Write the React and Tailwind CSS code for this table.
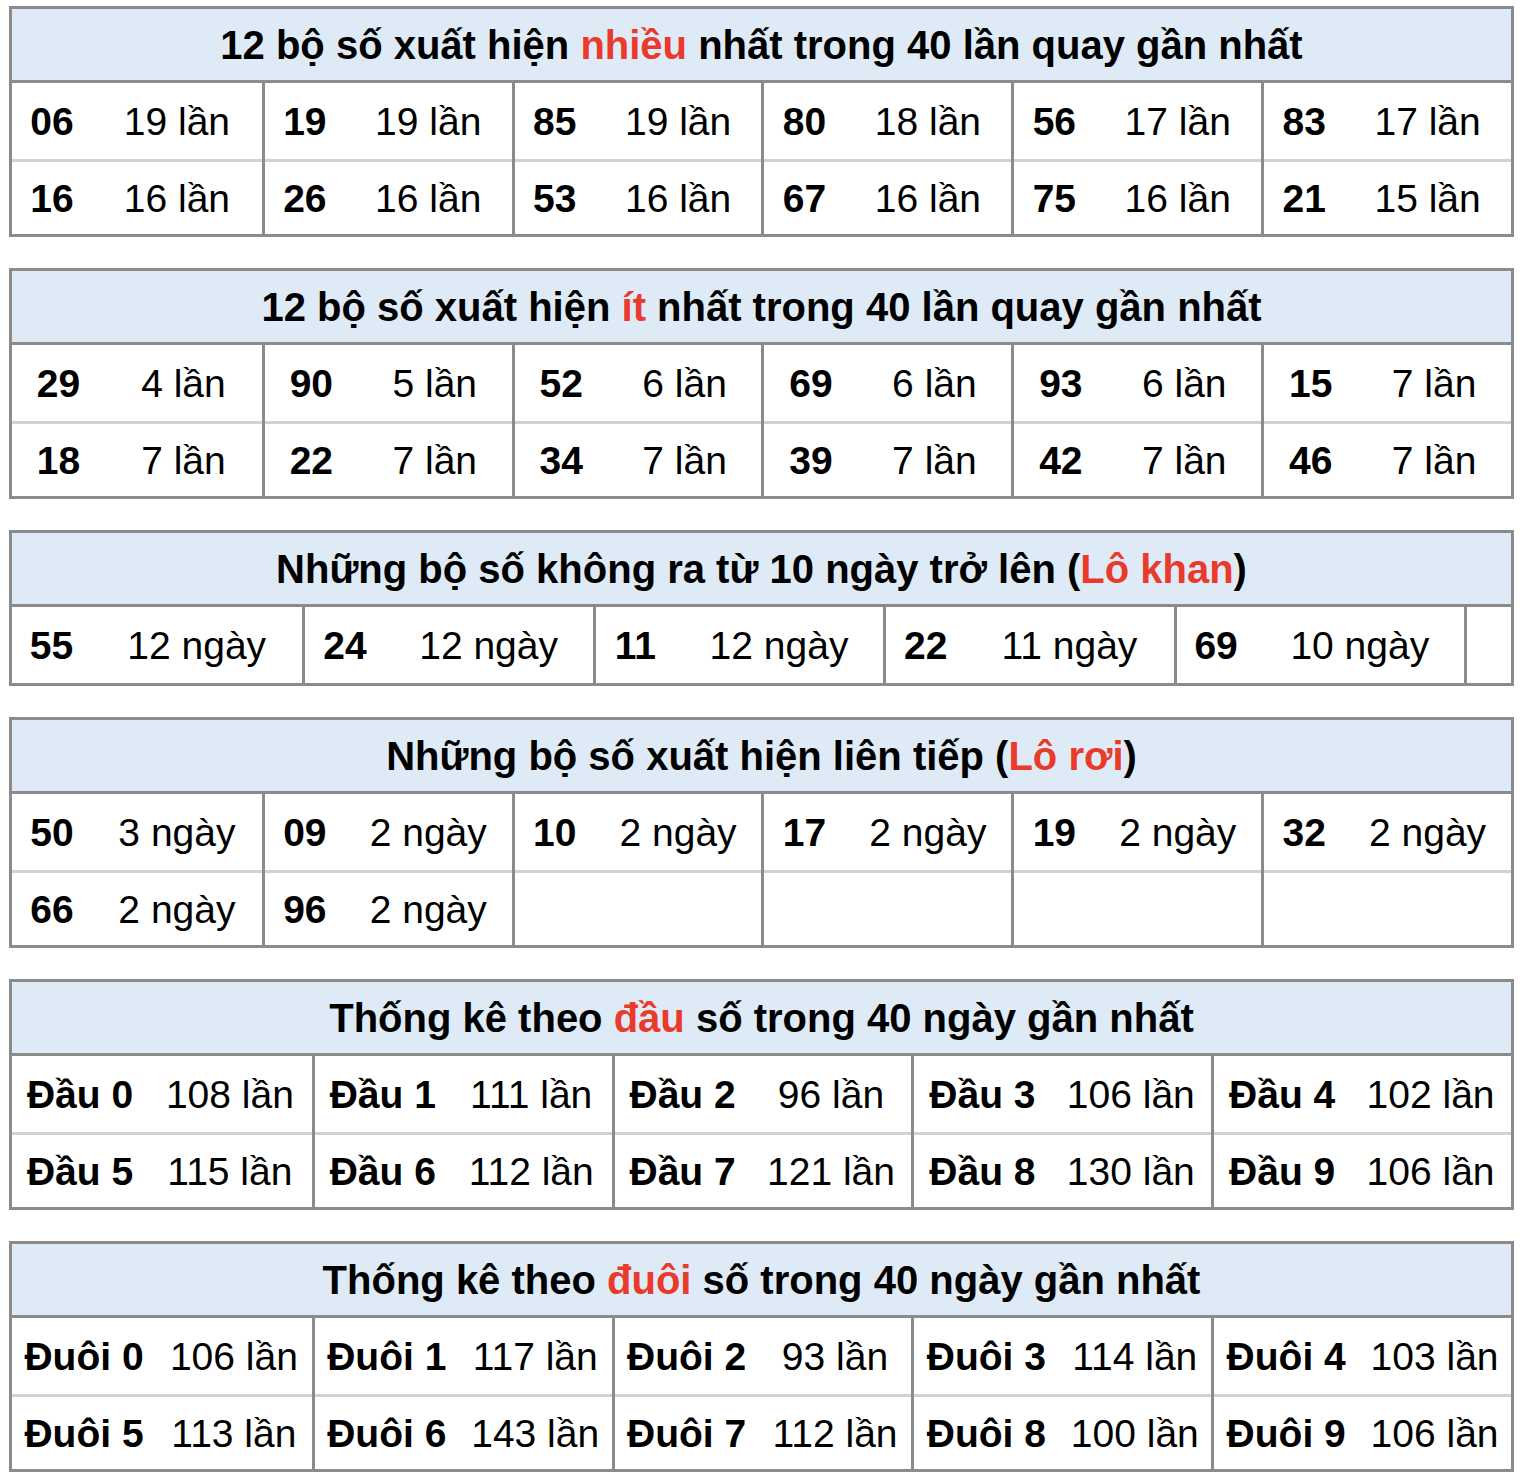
import React from 'react';

const RED = 'text-[#ea3a2c]';

const tables = [
  {
    title: (
      <>
        12 bộ số xuất hiện <span className={RED}>nhiều</span> nhất trong 40 lần quay gần nhất
      </>
    ),
    cols: 'grid-cols-6',
    pair: 'grid-cols-[80px_minmax(0,1fr)]',
    rows: [
      [['06', '19 lần'], ['19', '19 lần'], ['85', '19 lần'], ['80', '18 lần'], ['56', '17 lần'], ['83', '17 lần']],
      [['16', '16 lần'], ['26', '16 lần'], ['53', '16 lần'], ['67', '16 lần'], ['75', '16 lần'], ['21', '15 lần']],
    ],
  },
  {
    title: (
      <>
        12 bộ số xuất hiện <span className={RED}>ít</span> nhất trong 40 lần quay gần nhất
      </>
    ),
    cols: 'grid-cols-6',
    pair: 'grid-cols-[93px_minmax(0,1fr)]',
    rows: [
      [['29', '4 lần'], ['90', '5 lần'], ['52', '6 lần'], ['69', '6 lần'], ['93', '6 lần'], ['15', '7 lần']],
      [['18', '7 lần'], ['22', '7 lần'], ['34', '7 lần'], ['39', '7 lần'], ['42', '7 lần'], ['46', '7 lần']],
    ],
  },
  {
    title: (
      <>
        Những bộ số không ra từ 10 ngày trở lên (<span className={RED}>Lô khan</span>)
      </>
    ),
    cols: 'grid-cols-[repeat(5,minmax(0,1fr))_47px]',
    pair: 'grid-cols-[79px_minmax(0,1fr)]',
    rows: [[['55', '12 ngày'], ['24', '12 ngày'], ['11', '12 ngày'], ['22', '11 ngày'], ['69', '10 ngày'], null]],
  },
  {
    title: (
      <>
        Những bộ số xuất hiện liên tiếp (<span className={RED}>Lô rơi</span>)
      </>
    ),
    cols: 'grid-cols-6',
    pair: 'grid-cols-[80px_minmax(0,1fr)]',
    rows: [
      [['50', '3 ngày'], ['09', '2 ngày'], ['10', '2 ngày'], ['17', '2 ngày'], ['19', '2 ngày'], ['32', '2 ngày']],
      [['66', '2 ngày'], ['96', '2 ngày'], null, null, null, null],
    ],
  },
  {
    title: (
      <>
        Thống kê theo <span className={RED}>đầu</span> số trong 40 ngày gần nhất
      </>
    ),
    cols: 'grid-cols-5',
    pair: 'grid-cols-[136px_minmax(0,1fr)]',
    rows: [
      [['Đầu 0', '108 lần'], ['Đầu 1', '111 lần'], ['Đầu 2', '96 lần'], ['Đầu 3', '106 lần'], ['Đầu 4', '102 lần']],
      [['Đầu 5', '115 lần'], ['Đầu 6', '112 lần'], ['Đầu 7', '121 lần'], ['Đầu 8', '130 lần'], ['Đầu 9', '106 lần']],
    ],
  },
  {
    title: (
      <>
        Thống kê theo <span className={RED}>đuôi</span> số trong 40 ngày gần nhất
      </>
    ),
    cols: 'grid-cols-5',
    pair: 'grid-cols-[144px_minmax(0,1fr)]',
    rows: [
      [['Đuôi 0', '106 lần'], ['Đuôi 1', '117 lần'], ['Đuôi 2', '93 lần'], ['Đuôi 3', '114 lần'], ['Đuôi 4', '103 lần']],
      [['Đuôi 5', '113 lần'], ['Đuôi 6', '143 lần'], ['Đuôi 7', '112 lần'], ['Đuôi 8', '100 lần'], ['Đuôi 9', '106 lần']],
    ],
  },
];

const StatTable = ({ title, cols, pair, rows }) => {
  // transpose rows into columns so the dark separators run unbroken
  const columns = rows[0].map((_, ci) => rows.map((r) => r[ci]));

  return (
    <div className="border-[3px] border-[#8b8b8b]">
      <div className="h-[74px] bg-[#deebf7] border-b-[3px] border-[#8b8b8b] flex items-center justify-center">
        <span className="font-bold text-[40px] leading-none whitespace-pre">{title}</span>
      </div>
      <div className={`grid ${cols}`}>
        {columns.map((col, ci) => (
          <div key={ci} className={ci > 0 ? 'border-l-[3px] border-[#8b8b8b]' : ''}>
            {col.map((cell, ri) => (
              <div
                key={ri}
                className={`grid ${pair} items-center text-center text-[39px] leading-none ${
                  ri > 0 ? 'h-[75px] border-t-[3px] border-[#d2d2d2]' : 'h-[76px]'
                }`}
              >
                {cell && (
                  <>
                    <span className="font-bold whitespace-nowrap">{cell[0]}</span>
                    <span className="whitespace-nowrap">{cell[1]}</span>
                  </>
                )}
              </div>
            ))}
          </div>
        ))}
      </div>
    </div>
  );
};

const App = () => {
  return (
    <div className="min-h-screen bg-white text-black font-['Liberation_Sans',Arial,sans-serif] pt-[6px] pl-[9px]">
      <div className="w-[1505px] flex flex-col gap-[31px]">
        {tables.map((t, i) => (
          <StatTable key={i} {...t} />
        ))}
      </div>
    </div>
  );
};

export default App;
